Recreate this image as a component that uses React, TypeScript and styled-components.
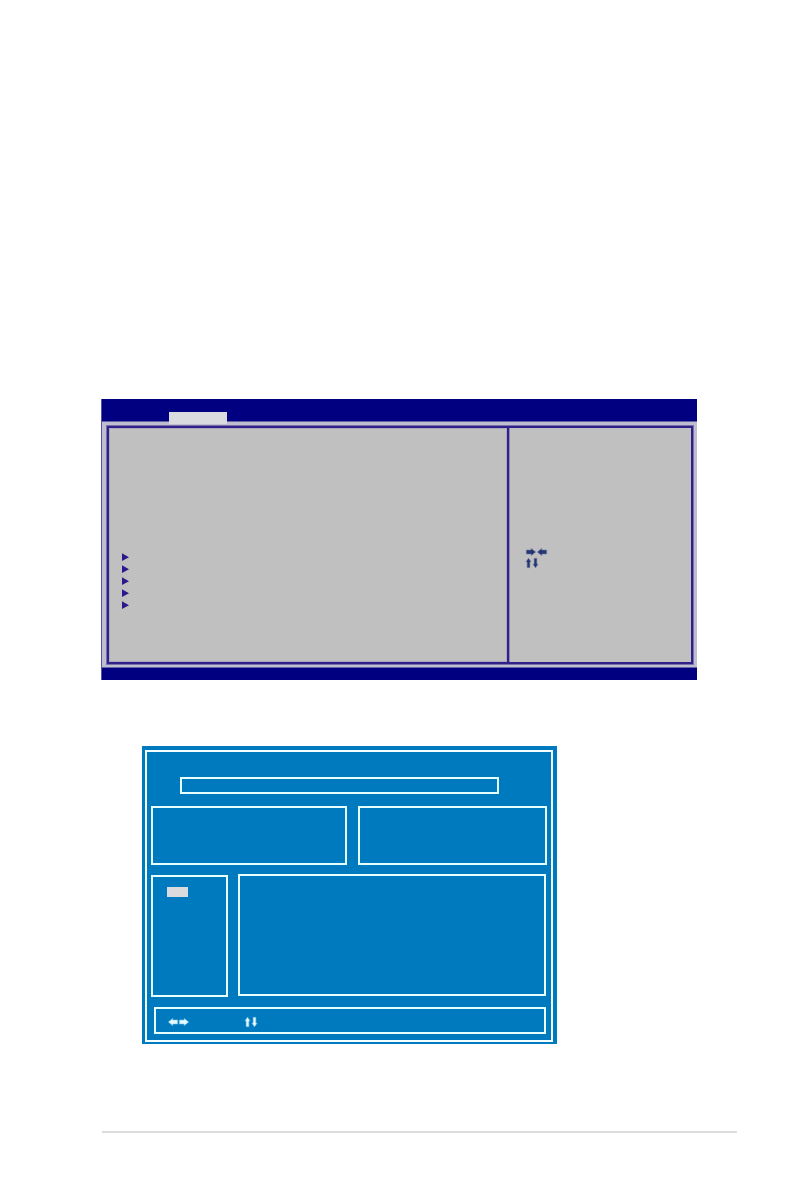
import React from "react";
import styled, { createGlobalStyle } from "styled-components";

const Global = createGlobalStyle`
  * { box-sizing: border-box; }
  body { margin: 0; background: #fff; font-family: "Liberation Sans", Arial, sans-serif; }
`;

const Page = styled.main`
  min-height: 100vh;
  padding: 399px 57px 63px 101px;
`;

const SetupScreen = styled.section`
  margin-right: 40px;
  background: #c0c0c0;
  border-left: 1px solid #5551a5;
`;

const SetupHeader = styled.header`
  height: 23px;
  padding: 13px 0 0 67px;
  background: #000080;
  border-bottom: 1px solid #6461a8;
`;

const ActiveTab = styled.div`
  position: relative;
  width: 58px;
  height: 12px;
  background: #dadbdf;
`;

const SetupBody = styled.div`
  padding: 3px 3px 2px 4px;
  background: #bfbdd0;
`;

const SetupFrame = styled.div`
  display: flex;
  height: 240px;
  border: 1px solid #7770ad;
  background: #c0c0c0;
`;

const SetupPane = styled.div<{ $width?: number; $top: number; $left: number }>`
  flex: ${(p) => (p.$width ? `0 1 ${p.$width}px` : "1 1 0")};
  padding: ${(p) => p.$top}px 0 0 ${(p) => p.$left}px;
  border: 2px solid #30218a;
  outline: 1px solid #aaa5bd;
  outline-offset: -3px;

  & + & {
    border-left: 0;
    outline: 0;
    box-shadow: inset 1px 0 #8c86b2;
  }
`;

const Markers = styled.ul`
  display: flex;
  flex-direction: column;
  gap: 4px;
  margin: 0;
  padding: 0;
  list-style: none;

  li { height: 8px; }
`;

const Icon = styled.svg`
  display: block;
`;

const KeyRow = styled.div<{ $gap: number }>`
  display: flex;
  align-items: center;
  gap: ${(p) => p.$gap}px;
  height: 11px;
`;

const SetupFooter = styled.footer`
  height: 13px;
  background: #000080;
  border-top: 1px solid #6461a8;
`;

const UtilityScreen = styled.section`
  width: 415px;
  max-width: 100%;
  margin: 66px 0 87px 41px;
  padding: 4px 4px 2px 3px;
  background: #007abf;
`;

const UtilityFrame = styled.div`
  padding: 25px 4px 6px;
  border: 2px solid #f4ffff;
`;

const Box = styled.div<{ $height: number; $grow?: number }>`
  flex: ${(p) => p.$grow ?? 1} 1 0;
  height: ${(p) => p.$height}px;
  border: 2px solid #e6ffff;
`;

const TitleBox = styled(Box)`
  margin: 0 48px 12px 29px;
`;

const BoxRow = styled.div<{ $gap: number; $inset?: number }>`
  display: flex;
  gap: ${(p) => p.$gap}px;
  margin-bottom: 10px;
  padding-right: ${(p) => p.$inset ?? 0}px;
`;

const MenuBox = styled(Box)`
  padding: 10px 14px;
`;

const Selection = styled.div`
  width: 21px;
  height: 10px;
  background: #dadbdf;
`;

const ListBox = styled(Box)`
  margin: -1px 0 1px;
`;

const KeyBar = styled(Box)`
  display: flex;
  align-items: center;
  gap: 56px;
  margin: 0 1px 0 3px;
  padding: 3px 0 0 12px;
`;

const Rule = styled.hr`
  height: 2px;
  margin: 0 0 0 1px;
  border: 0;
  background: #dcdcdc;
`;

type Direction = "left" | "right" | "up" | "down";

const turns: Record<Direction, number> = { right: 0, down: 90, left: 180, up: 270 };

function Arrow({ direction, color, halo }: { direction: Direction; color: string; halo: string }) {
  const upright = direction === "up" || direction === "down";
  const width = upright ? 5 : 10;
  const height = upright ? 10 : 8;
  return (
    <Icon width={width} height={height} viewBox={`${-width / 2} ${-height / 2} ${width} ${height}`} overflow="visible" aria-hidden="true">
      <path
        d={upright ? "M-4.7 -1.4H1V-2.6L4.9 0 1 2.6V1.4H-4.7Z" : "M-4.7 -2.1H.2V-3.7L4.7 0 .2 3.7V2.1H-4.7Z"}
        transform={`rotate(${turns[direction]})`}
        fill={color}
        stroke={halo}
        strokeWidth="0.6"
      />
    </Icon>
  );
}

const navy = { color: "#243575", halo: "#8087a5" };
const ice = { color: "#e4faff", halo: "#65b4df" };

export default function App() {
  return (
    <>
      <Global />
      <Page>
        <SetupScreen>
          <SetupHeader>
            <ActiveTab />
          </SetupHeader>
          <SetupBody>
            <SetupFrame>
              <SetupPane $width={402} $top={125} $left={13}>
                <Markers>
                  {[0, 1, 2, 3, 4].map((item) => (
                    <li key={item}>
                      <Icon width="8" height="8" viewBox="0 0 8 8" aria-hidden="true">
                        <path d="M0 .3 7 4.3 0 8Z" fill="#2a1b8c" />
                      </Icon>
                    </li>
                  ))}
                </Markers>
              </SetupPane>
              <SetupPane $top={118} $left={17}>
                <KeyRow $gap={1}>
                  <Arrow direction="right" {...navy} />
                  <Arrow direction="left" {...navy} />
                </KeyRow>
                <KeyRow $gap={2}>
                  <Arrow direction="up" {...navy} />
                  <Arrow direction="down" {...navy} />
                </KeyRow>
              </SetupPane>
            </SetupFrame>
          </SetupBody>
          <SetupFooter />
        </SetupScreen>

        <UtilityScreen>
          <UtilityFrame>
            <TitleBox $height={17} />
            <BoxRow $gap={11}>
              <Box $height={59} $grow={196} />
              <Box $height={59} $grow={189} />
            </BoxRow>
            <BoxRow $gap={10} $inset={1}>
              <MenuBox $height={122} $grow={45}>
                <Selection />
              </MenuBox>
              <ListBox $height={122} $grow={304} />
            </BoxRow>
            <KeyBar $height={27}>
              <KeyRow $gap={1}>
                <Arrow direction="left" {...ice} />
                <Arrow direction="right" {...ice} />
              </KeyRow>
              <KeyRow $gap={2}>
                <Arrow direction="up" {...ice} />
                <Arrow direction="down" {...ice} />
              </KeyRow>
            </KeyBar>
          </UtilityFrame>
        </UtilityScreen>
        <Rule />
      </Page>
    </>
  );
}
